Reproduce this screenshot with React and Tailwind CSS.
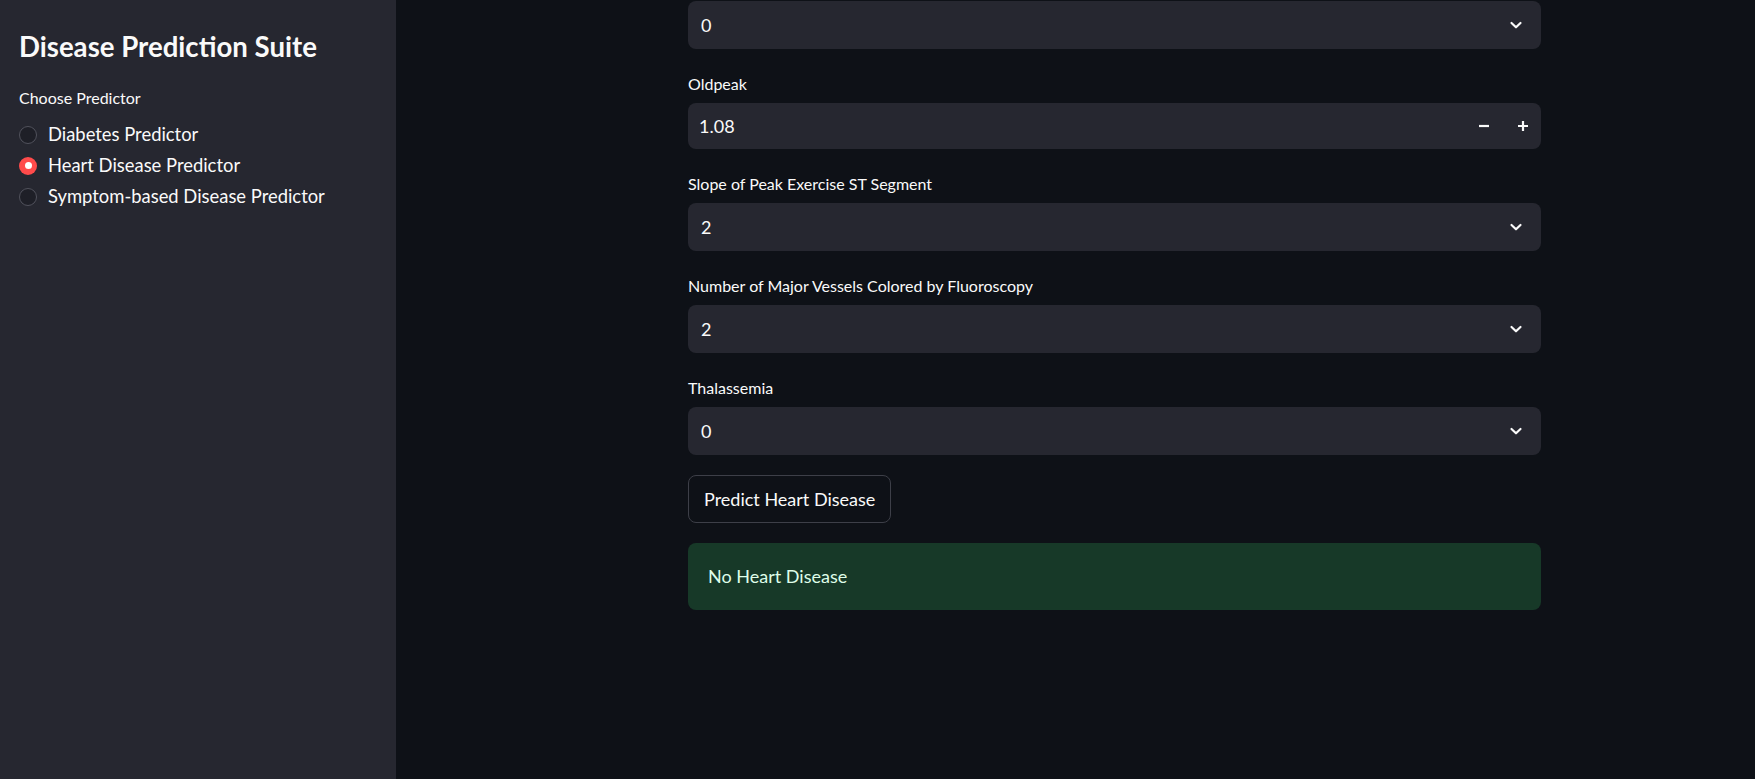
import React from 'react';

const font = { fontFamily: '"Lato", "Noto Sans", sans-serif' };

const Chevron = () => (
  <svg width="14" height="14" viewBox="0 0 14 14" fill="none">
    <path d="M2.5 5 L7 9.3 L11.5 5" stroke="#fafafa" strokeWidth="2.2" strokeLinecap="round" strokeLinejoin="round" />
  </svg>
);

const Label = ({ children }) => (
  <div className="h-[30px] mb-[4px] flex items-center text-[16px] text-[#fafafa]">{children}</div>
);

const SelectBox = ({ value }) => (
  <div className="h-[48px] rounded-lg bg-[#262730] flex items-center justify-between pl-[13px] pr-[18px] text-[18px] text-[#fafafa]">
    <span>{value}</span>
    <Chevron />
  </div>
);

const Radio = ({ label, checked }) => (
  <div className="h-[31px] flex items-center gap-[11px]">
    {checked ? (
      <span className="w-[18px] h-[18px] rounded-full bg-[#ff4b4b] flex items-center justify-center">
        <span className="w-[7px] h-[7px] rounded-full bg-white" />
      </span>
    ) : (
      <span className="w-[18px] h-[18px] rounded-full border border-[#51525c] bg-[#1e1f27]" />
    )}
    <span className="text-[18.4px] text-[#fafafa]">{label}</span>
  </div>
);

export default function App() {
  return (
    <div className="flex h-[779px] w-full bg-[#0e1117] overflow-hidden" style={font}>
      {/* Sidebar */}
      <aside className="w-[396px] shrink-0 bg-[#262730] px-[19px] pt-[27px]">
        <h1 className="text-[27.6px] leading-[40px] font-bold text-[#fafafa]">Disease Prediction Suite</h1>
        <div className="mt-[19px] text-[16px] leading-[24px] text-[#fafafa]">Choose Predictor</div>
        <div className="mt-[9px] flex flex-col">
          <Radio label="Diabetes Predictor" />
          <Radio label="Heart Disease Predictor" checked />
          <Radio label="Symptom-based Disease Predictor" />
        </div>
      </aside>

      {/* Main */}
      <main className="flex-1 pl-[292px] pt-[1px]">
        <div className="w-[853px] flex flex-col">
          <SelectBox value="0" />

          <div className="mt-[20px]">
            <Label>Oldpeak</Label>
            <div className="h-[46px] rounded-lg bg-[#262730] flex items-center justify-between pl-[11px] pr-[12px] text-[18px] text-[#fafafa]">
              <span>1.08</span>
              <div className="flex items-center gap-[27px]">
                <svg width="12" height="12" viewBox="0 0 12 12"><path d="M1 6 H11" stroke="#fafafa" strokeWidth="2.2" /></svg>
                <svg width="12" height="12" viewBox="0 0 12 12"><path d="M1 6 H11 M6 1 V11" stroke="#fafafa" strokeWidth="2.2" /></svg>
              </div>
            </div>
          </div>

          <div className="mt-[20px]">
            <Label>Slope of Peak Exercise ST Segment</Label>
            <SelectBox value="2" />
          </div>

          <div className="mt-[20px]">
            <Label>Number of Major Vessels Colored by Fluoroscopy</Label>
            <SelectBox value="2" />
          </div>

          <div className="mt-[20px]">
            <Label>Thalassemia</Label>
            <SelectBox value="0" />
          </div>

          <div className="mt-[20px]">
            <button className="h-[48px] px-[15px] rounded-lg border border-[#3d3f48] bg-[#0e1117] text-[18px] text-[#fafafa]">
              Predict Heart Disease
            </button>
          </div>

          <div className="mt-[20px] h-[67px] rounded-lg bg-[#173928] flex items-center px-[20px] text-[18px] text-[#dffde9]">
            No Heart Disease
          </div>
        </div>
      </main>
    </div>
  );
}
